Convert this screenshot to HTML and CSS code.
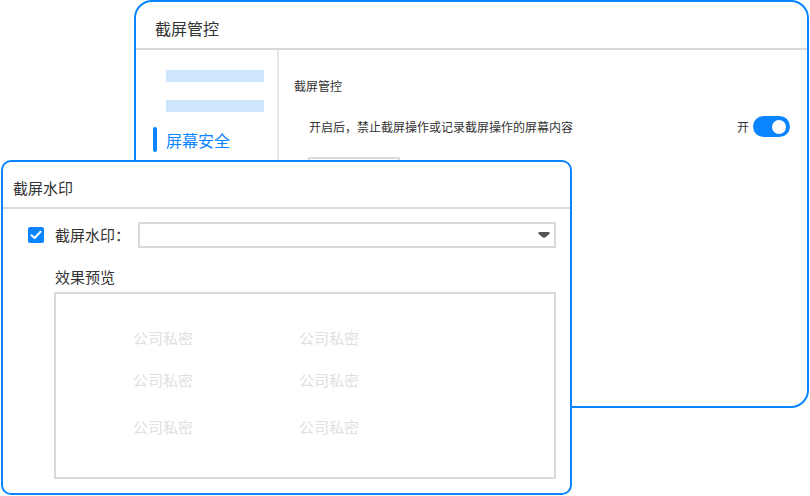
FILE: index.html
```html
<!DOCTYPE html>
<html lang="zh">
<head>
<meta charset="utf-8">
<link rel="stylesheet" href="styles.css">
</head>
<body>
<div class="desktop">
  <div class="win win-back">
    <div class="win-head head-back">截屏管控</div>
    <div class="back-body">
      <div class="sidebar">
        <div class="ph-bar"></div>
        <div class="ph-bar"></div>
        <div class="menu-item">
          <span class="indicator"></span>
          <span class="menu-text">屏幕安全</span>
        </div>
      </div>
      <div class="content">
        <div class="section-title">截屏管控</div>
        <div class="setting-row">
          <span class="setting-desc">开启后，禁止截屏操作或记录截屏操作的屏幕内容</span>
          <span class="switch-wrap">
            <span class="switch-label">开</span>
            <span class="switch"><span class="knob"></span></span>
          </span>
        </div>
        <div class="ghost-box"></div>
      </div>
    </div>
  </div>

  <div class="win win-front">
    <div class="win-head head-front">截屏水印</div>
    <div class="front-body">
      <div class="wm-row">
        <span class="checkbox">
          <svg width="12" height="10" viewBox="0 0 12 10"><path d="M1.5 5.2 L4.6 8 L10.5 1.8" fill="none" stroke="#fff" stroke-width="2" stroke-linecap="round" stroke-linejoin="round"/></svg>
        </span>
        <span class="wm-label">截屏水印：</span>
        <div class="select">
          <svg class="caret" width="12" height="6" viewBox="0 0 12 6"><path d="M1.5 0 H10.5 Q12 0 11.6 1.2 Q11 2.6 7.4 5.2 Q6 6.2 4.6 5.2 Q1 2.6 0.4 1.2 Q0 0 1.5 0 Z" fill="#555"/></svg>
        </div>
      </div>
      <div class="preview">
        <div class="preview-label">效果预览</div>
        <div class="preview-box">
          <div class="wm-line line1"><span>公司私密</span><span>公司私密</span></div>
          <div class="wm-line line2"><span>公司私密</span><span>公司私密</span></div>
          <div class="wm-line line3"><span>公司私密</span><span>公司私密</span></div>
        </div>
      </div>
    </div>
  </div>
</div>
</body>
</html>
```

FILE: styles.css
```css
* { box-sizing: border-box; }
html, body {
  margin: 0;
  padding: 0;
  background: #fff;
}
body {
  font-family: "Noto Sans CJK SC", "Noto Sans", sans-serif;
  color: #333;
}
.desktop {
  position: relative;
  width: 810px;
  height: 496px;
  overflow: hidden;
}
.win {
  position: absolute;
  background: #fff;
  border: 2px solid #0a85ff;
  display: flex;
  flex-direction: column;
}
.win-back {
  left: 134px;
  top: 0;
  width: 675px;
  height: 408px;
  border-radius: 18px;
}
.win-front {
  left: 1px;
  top: 160px;
  width: 571px;
  height: 335px;
  border-radius: 10px;
}
.win-head {
  flex: none;
  border-bottom: 2px solid #dadada;
  color: #333;
}
.head-back {
  height: 48px;
  padding: 15px 0 0 19px;
  font-size: 16px;
  line-height: 22px;
}
.head-front {
  height: 47px;
  padding: 15px 0 0 10px;
  font-size: 15px;
  line-height: 22px;
}
.back-body {
  flex: 1;
  display: flex;
}
.sidebar {
  width: 143px;
  flex: none;
  border-right: 2px solid #e6e6e6;
  padding: 20px 0 0 17px;
  display: flex;
  flex-direction: column;
}
.ph-bar {
  width: 98px;
  height: 12px;
  margin-left: 13px;
  margin-bottom: 18px;
  background: #cde6fc;
}
.menu-item {
  margin-top: -3px;
  display: flex;
  align-items: center;
  gap: 9px;
}
.indicator {
  width: 4px;
  height: 25px;
  border-radius: 2px;
  background: #0a85ff;
}
.menu-text {
  color: #0a85ff;
  font-size: 16px;
  line-height: 24px;
}
.content {
  flex: 1;
  padding: 27px 17px 0 15px;
  display: flex;
  flex-direction: column;
}
.section-title {
  font-size: 12px;
  line-height: 18px;
  color: #333;
}
.setting-row {
  margin-top: 21px;
  padding-left: 15px;
  display: flex;
  align-items: center;
  justify-content: space-between;
  height: 21px;
}
.setting-desc {
  font-size: 12px;
  line-height: 18px;
  color: #333;
}
.switch-wrap {
  display: flex;
  align-items: center;
  gap: 4px;
}
.switch-label {
  font-size: 12px;
  line-height: 18px;
  color: #333;
}
.switch {
  width: 37px;
  height: 21px;
  border-radius: 11px;
  background: #0a85ff;
  display: flex;
  align-items: center;
  justify-content: flex-end;
  padding-right: 4px;
}
.knob {
  width: 14px;
  height: 14px;
  border-radius: 50%;
  background: #fff;
}
.ghost-box {
  margin-top: 20px;
  margin-left: 14px;
  width: 92px;
  height: 30px;
  border: 2px solid #dadada;
}
.front-body {
  flex: 1;
  padding: 13px 0 0 25px;
  display: flex;
  flex-direction: column;
}
.wm-row {
  display: flex;
  align-items: center;
  height: 26px;
}
.checkbox {
  width: 16px;
  height: 16px;
  border-radius: 2px;
  background: #0a85ff;
  display: flex;
  align-items: center;
  justify-content: center;
  flex: none;
}
.wm-label {
  margin-left: 11px;
  font-size: 15px;
  line-height: 22px;
  color: #333;
  width: 83px;
  flex: none;
}
.select {
  width: 418px;
  height: 26px;
  border: 2px solid #dadada;
  display: flex;
  align-items: center;
  justify-content: flex-end;
  padding-right: 4px;
}
.preview {
  margin-left: 26px;
  margin-top: 18px;
  display: flex;
  flex-direction: column;
}
.preview-label {
  padding-left: 1px;
  font-size: 15px;
  line-height: 22px;
  color: #333;
}
.preview-box {
  margin-top: 4px;
  width: 502px;
  height: 187px;
  border: 2px solid #dadada;
  padding-left: 77px;
}
.wm-line {
  display: flex;
  font-size: 15px;
  line-height: 22px;
  color: #e0e0e0;
}
.wm-line span {
  width: 166px;
}
.line1 { margin-top: 33px; }
.line2 { margin-top: 20px; }
.line3 { margin-top: 25px; }
```
